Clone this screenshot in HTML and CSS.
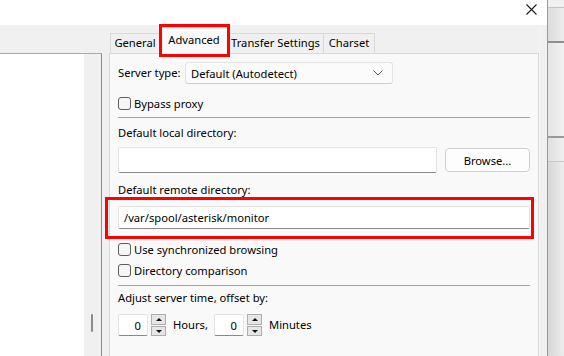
FILE: index.html
```html
<!DOCTYPE html>
<html>
<head>
<meta charset="utf-8">
<link rel="stylesheet" href="styles.css">
</head>
<body>
<div class="screen">
  <div class="window">
    <div class="titlebar">
      <svg class="close" width="11" height="11" viewBox="0 0 11 11"><path d="M0.5 0.5 L10.5 10.5 M10.5 0.5 L0.5 10.5" stroke="#1a1a1a" stroke-width="1.1" fill="none"/></svg>
    </div>
    <div class="body">
      <div class="left">
        <div class="list"></div>
        <div class="track"><div class="thumb"></div></div>
      </div>
      <div class="dialog">
        <div class="tabstrip">
          <div class="tab t-general">General</div>
          <div class="tab t-advanced active">Advanced</div>
          <div class="tab t-transfer">Transfer Settings</div>
          <div class="tab t-charset">Charset</div>
        </div>
        <div class="panel">
          <div class="row server-row">
            <span class="label server-label">Server type:</span>
            <div class="select">
              <span>Default (Autodetect)</span>
              <svg width="10" height="6" viewBox="0 0 10 6"><path d="M0.5 0.5 L5 5 L9.5 0.5" stroke="#5a5a5a" stroke-width="1" fill="none"/></svg>
            </div>
          </div>
          <div class="check-row bypass"><span class="check"></span><span class="label">Bypass proxy</span></div>
          <div class="sep sep1"></div>
          <div class="label block local-label">Default local directory:</div>
          <div class="row local-row">
            <div class="input local-input"></div>
            <div class="button">Browse...</div>
          </div>
          <div class="label block remote-label">Default remote directory:</div>
          <div class="remote-wrap">
            <div class="input remote-input">/var/spool/asterisk/monitor</div>
          </div>
          <div class="check-row sync"><span class="check"></span><span class="label">Use synchronized browsing</span></div>
          <div class="check-row compare"><span class="check"></span><span class="label">Directory comparison</span></div>
          <div class="sep sep2"></div>
          <div class="label block adjust-label">Adjust server time, offset by:</div>
          <div class="row spin-row">
            <div class="input num">0</div>
            <div class="spin"><span class="up"></span><span class="down"></span></div>
            <span class="label unit hours">Hours,</span>
            <div class="input num">0</div>
            <div class="spin"><span class="up"></span><span class="down"></span></div>
            <span class="label unit">Minutes</span>
          </div>
        </div>
      </div>
      <div class="gutter"></div>
    </div>
  </div>
  <div class="side">
    <div class="s-top"></div>
    <div class="s-a"></div>
    <div class="s-b"></div>
    <div class="s-c"></div>
    <div class="s-d"></div>
  </div>
</div>
</body>
</html>
```

FILE: styles.css
```css
* { box-sizing: border-box; }
html, body { margin: 0; padding: 0; }
body {
  width: 564px;
  height: 356px;
  overflow: hidden;
  font-family: "Noto Sans", "Open Sans", sans-serif;
  font-size: 11.2px;
  color: #000000;
  background: #f0f0f0;
}
.screen { display: flex; width: 564px; height: 356px; }
.window { width: 547px; height: 356px; display: flex; flex-direction: column; background: #f0f0f0; }
.titlebar { height: 25px; background: #ffffff; display: flex; justify-content: flex-end; align-items: flex-start; padding: 4px 10px 0 0; }
.close { display: block; }
.body { flex: 1; display: flex; min-height: 0; }

.left { width: 102px; margin-top: 28px; display: flex; border-top: 1px solid #a8a8a8; border-right: 1px solid #8c8c8c; }
.list { width: 84px; background: #ffffff; }
.track { width: 17px; background: #f0f0f0; padding: 260px 0 0 7px; }
.thumb { width: 2px; height: 18px; background: #8b8b8b; border-radius: 1px; }

.dialog { width: 430px; margin-left: 7px; display: flex; flex-direction: column; }
.tabstrip { height: 28px; display: flex; align-items: flex-end; padding-left: 1px; }
.tab { height: 20px; border: 1px solid #d9d9d9; border-bottom: none; background: #f0f0f0; display: flex; align-items: center; justify-content: center; line-height: 16px; padding-bottom: 1px; white-space: nowrap; }
.t-general { width: 50px; }
.t-advanced { width: 68px; }
.t-transfer { width: 96px; border-left: none; }
.t-charset { width: 51px; border-left: none; }
.tab.active { position: relative; height: 27px; margin-bottom: -1px; background: #f9f9f9; z-index: 1; padding-bottom: 2px; }
.tab.active::after { content: ""; position: absolute; left: -2px; right: -3px; top: -4px; bottom: -3px; border: 3px solid #ff0000; }

.panel { flex: 1; background: #f9f9f9; border: 1px solid #d9d9d9; border-bottom: none; padding: 8px 7px 0 8px; }
.row { display: flex; align-items: center; }
.label { line-height: 16px; white-space: nowrap; }
.block { display: block; }
.server-row { height: 22px; }
.server-label { width: 67px; }
.select { width: 208px; height: 22px; background: #fbfbfb; border: 1px solid #e3e3e3; border-bottom-color: #cfcfcf; border-radius: 3px; display: flex; align-items: center; justify-content: space-between; padding: 0 9px 0 5px; }
.select svg { display: block; }

.check-row { display: flex; align-items: center; height: 13px; }
.check { width: 13px; height: 13px; border: 1px solid #5c5c5c; border-radius: 3px; background: #f6f6f6; margin-right: 3px; flex: none; }
.bypass { margin-top: 13px; }
.sep { height: 1px; background: #a3a3a3; width: 412px; }
.sep1 { margin-top: 7px; }
.local-label { margin-top: 7px; }
.local-row { margin-top: 6px; justify-content: space-between; width: 412px; }
.input { background: #ffffff; border: 1px solid #e3e3e3; border-bottom-color: #8a8a8a; border-radius: 2px; }
.local-input { width: 319px; height: 26px; }
.button { width: 85px; height: 24px; background: #fdfdfd; border: 1px solid #d0d0d0; border-radius: 4px; display: flex; align-items: center; justify-content: center; }
.remote-label { margin-top: 9px; }
.remote-wrap { position: relative; margin-top: 8px; width: 412px; }
.remote-wrap::after { content: ""; position: absolute; left: -13px; right: -4px; top: -9px; bottom: -10px; border: 3px solid #ff0000; }
.remote-input { height: 23px; display: flex; align-items: center; padding-left: 5px; }
.sync { margin-top: 14px; }
.compare { margin-top: 8px; }
.sep2 { margin-top: 8px; }
.adjust-label { margin-top: 4px; }
.spin-row { margin-top: 8px; height: 22px; }
.num { width: 30px; height: 22px; display: flex; align-items: center; justify-content: flex-end; padding-right: 6px; }
.spin { width: 15px; height: 22px; margin-left: 3px; display: flex; flex-direction: column; gap: 1px; }
.spin span { flex: 1; background: #e6e6e6; border: 1px solid #adadad; position: relative; }
.spin .up::after { content: ""; position: absolute; left: 4px; top: 3px; border-left: 3px solid transparent; border-right: 3px solid transparent; border-bottom: 3px solid #111; }
.spin .down::after { content: ""; position: absolute; left: 4px; top: 3px; border-left: 3px solid transparent; border-right: 3px solid transparent; border-top: 3px solid #111; }
.unit { margin-left: 7px; }
.hours { width: 41px; }

.gutter { flex: 1; border-left: 1px solid #f4f4f4; }

.side { width: 17px; height: 356px; border-left: 1px solid #9a9a9a; background: linear-gradient(to right, #d6d6d6, #ededed); display: flex; flex-direction: column; }
.s-top { height: 8px; background: #f0f0f0; border-bottom: 1px solid #c4c4c4; }
.s-a { height: 35px; background: linear-gradient(to right, #dcdcdc, #ececec); border-bottom: 2px solid #8f8f8f; }
.s-b { height: 95px; background: linear-gradient(to right, #e4e4e4, #f2f2f2); border-bottom: 2px solid #9a9a9a; }
.s-c { height: 24px; background: linear-gradient(to right, #e0e0e0, #efefef); border-bottom: 1px solid #c8c8c8; }
.s-d { flex: 1; }
```
